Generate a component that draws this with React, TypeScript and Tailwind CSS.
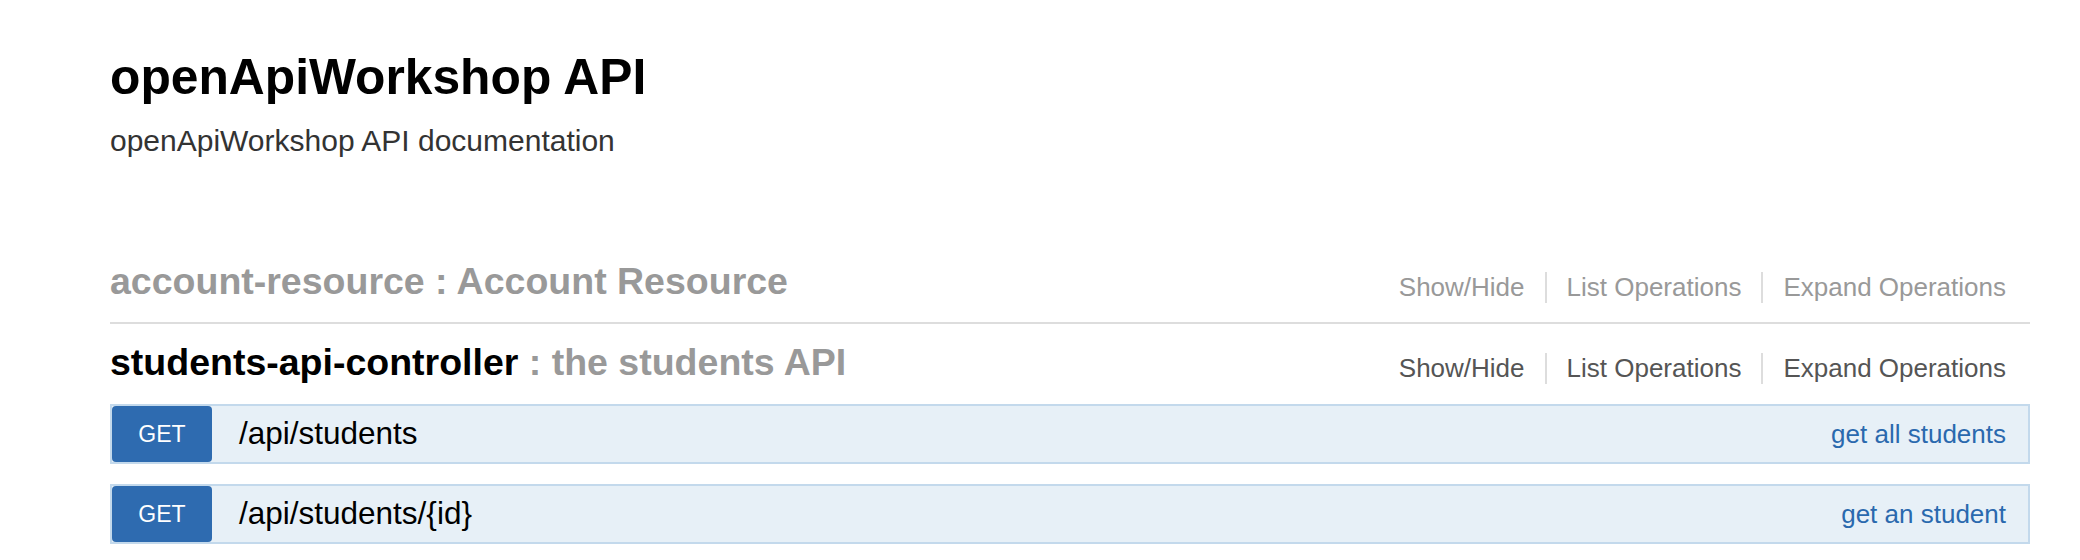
const endpoints = [
  { method: "GET", path: "/api/students", summary: "get all students" },
  { method: "GET", path: "/api/students/{id}", summary: "get an student" },
];

function Options({ muted }: { muted?: boolean }) {
  const color = muted ? "text-[#999]" : "text-[#555]";
  return (
    <ul className={`flex items-end text-[26px] leading-[31px] ${color}`}>
      <li className="pr-[20px]">Show/Hide</li>
      <li className="px-[20px] border-l-2 border-[#ddd]">List Operations</li>
      <li className="pl-[20px] border-l-2 border-[#ddd]">Expand Operations</li>
    </ul>
  );
}

export default function App() {
  return (
    <div className="min-h-[560px] bg-white pl-[110px] pr-[50px] pt-[49px] font-['Liberation_Sans',Arial,sans-serif]">
      <h1 className="text-[49.75px] font-bold leading-[56px] text-black">openApiWorkshop API</h1>
      <p className="mt-[18px] text-[30px] leading-[36px] text-[#333]">openApiWorkshop API documentation</p>

      {/* collapsed resource */}
      <div className="mt-[100px] flex items-end justify-between border-b-2 border-[#ddd] pb-[19px] pr-[24px]">
        <h2 className="text-[37.5px] font-bold leading-[44px] text-[#999]">account-resource : Account Resource</h2>
        <Options muted />
      </div>

      {/* expanded resource */}
      <div className="flex items-end justify-between pt-[16px] pb-[20px] pr-[24px]">
        <h2 className="text-[37.5px] font-bold leading-[44px]">
          <span className="text-black">students-api-controller</span>
          <span className="text-[#999]"> : the students API</span>
        </h2>
        <Options />
      </div>

      <div className="flex flex-col gap-[20px]">
        {endpoints.map((ep) => (
          <div key={ep.path} className="flex h-[60px] items-stretch border-2 border-[#c3d9ec] bg-[#e7f0f7]">
            <span className="flex w-[100px] items-center justify-center rounded-[4px] bg-[#2e6bb0] text-[23px] text-white">
              {ep.method}
            </span>
            <span className="ml-[27px] flex items-center text-[31.5px] text-black">{ep.path}</span>
            <span className="ml-auto flex items-center pr-[22px] text-[26px] text-[#2a69ae]">{ep.summary}</span>
          </div>
        ))}
      </div>
    </div>
  );
}
